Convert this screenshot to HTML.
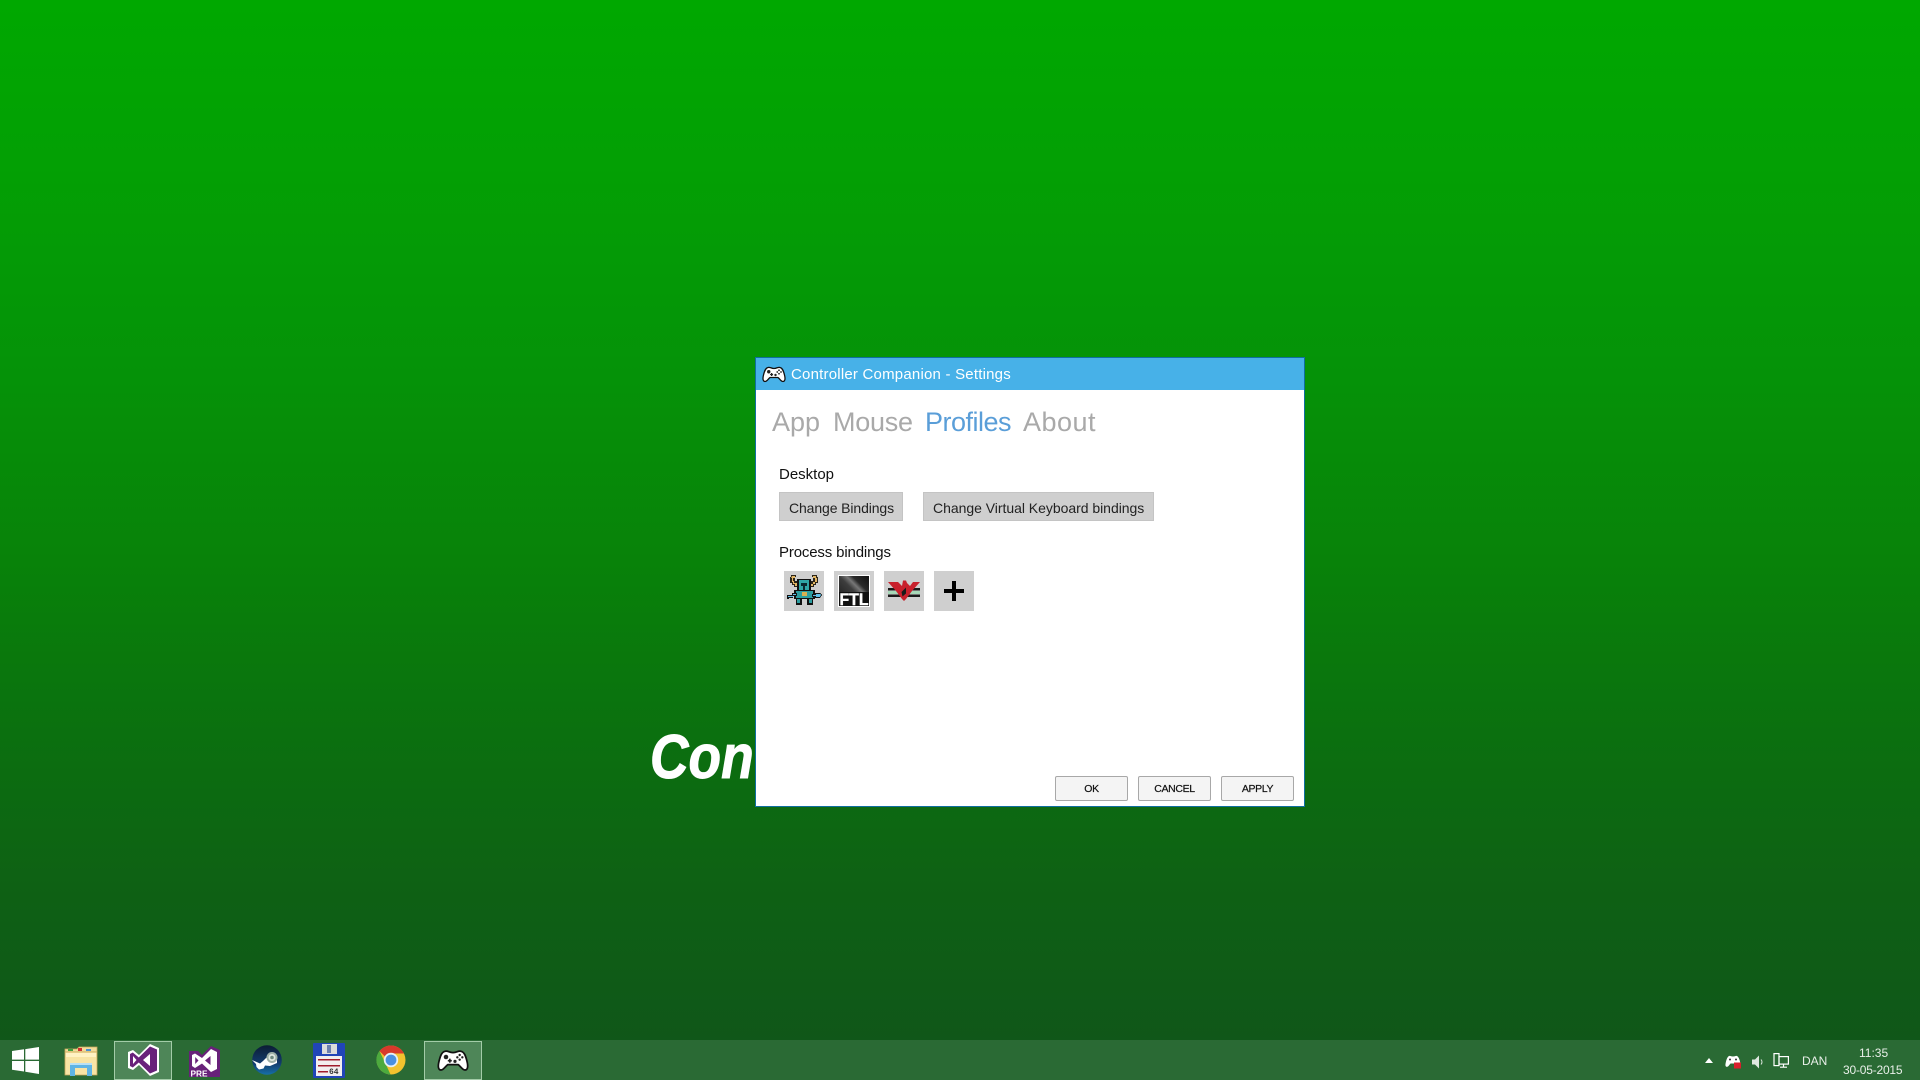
<!DOCTYPE html>
<html lang="en"><head><meta charset="utf-8"><title>Controller Companion - Settings</title>
<style>
html,body{margin:0;padding:0;width:1920px;height:1080px;overflow:hidden}
body{position:relative;font-family:"Liberation Sans",sans-serif;background:linear-gradient(180deg,#00a800 0,#03a004 15%,#059208 35%,#088209 52%,#0b700f 68%,#0e6114 82%,#10541a 100%)}
.a{position:absolute;white-space:nowrap}
svg{position:absolute;overflow:visible}
</style></head><body>
<svg width="0" height="0" style="position:absolute"><defs>
<symbol id="pad" viewBox="0 0 48 32" overflow="visible">
<path d="M12 3C16 1.500 18 5 24 5S32 1.500 36 3C41 4 43 10 45 18C47 26 46 31 42 31C38 31 36 26 32 23H16C12 26 10 31 6 31C2 31 1 26 3 18C5 10 7 4 12 3Z" fill="#fff" stroke="#111" stroke-width="2.600" stroke-linejoin="round"/>
<circle cx="13.500" cy="11.500" r="3.400" fill="#222"/><circle cx="34" cy="8.500" r="1.800" fill="#222"/><circle cx="38" cy="12" r="1.800" fill="#222"/><circle cx="30.500" cy="12" r="1.800" fill="#222"/><circle cx="34" cy="15.500" r="1.800" fill="#222"/><rect x="18" y="14" width="2.500" height="6" fill="#222"/><rect x="16.200" y="15.800" width="6" height="2.500" fill="#222"/><circle cx="27" cy="18" r="2.400" fill="#222"/>
</symbol></defs></svg>

<div class="a" style="left:650px;top:723px;width:102px;height:70px;overflow:hidden"><div style="transform:scaleX(.86);transform-origin:0 0;font:italic bold 62px/70px 'Liberation Sans',sans-serif;color:#fff;-webkit-text-stroke:1px #fff">Controller Companion</div></div>

<!-- dialog -->
<div class="a" style="left:755px;top:357px;width:550px;height:450px;background:#fff;border:1px solid #0f6f9f;box-sizing:border-box">
<div style="position:absolute;left:0;top:0;right:0;height:32px;background:#47b1e8"></div></div>
<svg style="left:762px;top:365px" width="24" height="18"><use href="#pad" width="24" height="18"/></svg>
<div class="a" style="left:791px;top:366px;font-size:15px;line-height:18px;color:#fff;letter-spacing:.21px">Controller Companion - Settings</div>
<div class="a" style="left:772px;top:406px;font-size:27px;line-height:32px;color:#a9a9a9">App</div>
<div class="a" style="left:833px;top:406px;font-size:27px;line-height:32px;color:#a9a9a9;letter-spacing:-.25px">Mouse</div>
<div class="a" style="left:925px;top:406px;font-size:27px;line-height:32px;color:#5a9ed8;letter-spacing:-.5px">Profiles</div>
<div class="a" style="left:1023px;top:406px;font-size:27px;line-height:32px;color:#a9a9a9;letter-spacing:.5px">About</div>
<div class="a" style="left:779px;top:465.500px;font-size:15px;line-height:18px;color:#111">Desktop</div>
<div class="a" style="left:779px;top:492px;width:124px;height:29px;background:#cfcfcf;border:1px solid #c4c4c4;box-sizing:border-box"></div>
<div class="a" style="left:789px;top:499px;font-size:14px;line-height:18px;color:#222;letter-spacing:-.11px">Change Bindings</div>
<div class="a" style="left:923px;top:492px;width:231px;height:29px;background:#cfcfcf;border:1px solid #c4c4c4;box-sizing:border-box"></div>
<div class="a" style="left:933px;top:499px;font-size:14px;line-height:18px;color:#222;letter-spacing:-.03px">Change Virtual Keyboard bindings</div>
<div class="a" style="left:779px;top:543.500px;font-size:15px;line-height:18px;color:#111;letter-spacing:-.15px">Process bindings</div>

<!-- shovel knight -->
<svg style="left:784px;top:571px" width="40" height="40" viewBox="0 0 40 40" shape-rendering="crispEdges">
<rect width="40" height="40" fill="#cfcfcf"/>
<path d="M7 4h5v2H11v4h2v3h2v3H10v-2H8v-2H6V6h1zM28 4h5v2h1v6h-2v2h-2v2H25v-3h2v-3h2V6h-1z" fill="#2a2418"/>
<path d="M8 5h3v2H9v3h1v2h3v3h-2v-2H9v-2H8V7H7zM29 5h3v2h1v4h-2v2h-2v2h-3v-2h3v-2h2V7h-2z" fill="#e2b664"/>
<rect x="13" y="8" width="14" height="13" fill="#111"/><rect x="15" y="9" width="10" height="10" fill="#2fa6a6"/><rect x="17" y="12" width="6" height="3" fill="#0a2a30"/><rect x="19" y="12" width="2" height="7" fill="#0a2a30"/>
<rect x="10" y="19" width="21" height="9" fill="#111"/><rect x="12" y="20" width="17" height="7" fill="#2c9da0"/><rect x="18" y="21" width="5" height="4" fill="#d8b050"/>
<path d="M3 24h5v-2h5v3H9v2H5v1H3zM28 23h3v-1h5l2 2-2 3h-5v-1h-3z" fill="#111"/><path d="M4 25h5v-2h3v1H9v2H4zM29 24h3v-1h4l1 1-1 2h-4v-1h-3z" fill="#5fc0e8"/>
<rect x="12" y="28" width="6" height="6" fill="#111"/><rect x="23" y="28" width="6" height="6" fill="#111"/><rect x="13" y="28" width="3" height="4" fill="#2c9da0"/><rect x="25" y="28" width="3" height="4" fill="#2c9da0"/>
</svg>
<!-- FTL -->
<svg style="left:834px;top:571px" width="40" height="40" viewBox="0 0 40 40">
<defs><linearGradient id="ft" x1="0" y1="1" x2="1" y2="0"><stop offset="0" stop-color="#151515"/><stop offset=".5" stop-color="#3d3d3d"/><stop offset=".62" stop-color="#777"/><stop offset=".72" stop-color="#2a2a2a"/><stop offset="1" stop-color="#111"/></linearGradient></defs>
<rect width="40" height="40" fill="#cfcfcf"/><rect x="4" y="4" width="32" height="32" fill="#fff"/><rect x="5" y="5" width="30" height="30" fill="url(#ft)"/><rect x="5" y="21" width="30" height="14" fill="#111"/>
<text x="20" y="34" text-anchor="middle" font-family="Liberation Sans" font-weight="700" font-size="16.500" fill="#fff" stroke="#fff" stroke-width=".4" textLength="29" lengthAdjust="spacingAndGlyphs">FTL</text>
</svg>
<!-- papers please -->
<svg style="left:884px;top:571px" width="40" height="40" viewBox="0 0 40 40">
<rect width="40" height="40" fill="#cfcfcf"/>
<path d="M4 17h12v2.500H4zM24 17h12v2.500H24zM4 23.500h14v2.500H4zM22 23.500h14v2.500H22z" fill="#1a1a1a"/><path d="M4 20h13v3H4zM23 20h13v3H23z" fill="#a6d8b8"/>
<path d="M4 11H14L18 15 19 9.500H22L23 12 26 15 29 11H36L28 20 25 24 22 28 20 30 18 28 15 24 12 20Z" fill="#c8202c"/>
<path d="M17.500 21L22 16.500V22.500L18.500 25.500Z" fill="#1a1a1a"/>
</svg>
<!-- plus -->
<svg style="left:934px;top:571px" width="40" height="40" viewBox="0 0 40 40"><rect width="40" height="40" fill="#cfcfcf"/><rect x="10" y="18" width="20" height="4" fill="#000"/><rect x="18" y="10" width="4" height="20" fill="#000"/></svg>

<!-- OK/Cancel/Apply -->
<div class="a" style="left:1055px;top:776px;width:73px;height:25px;background:#f4f4f4;border:1px solid #a8a8a8;border-radius:2px;box-sizing:border-box;text-align:center;font-size:10.500px;line-height:25px;color:#111;letter-spacing:-.35px;-webkit-text-stroke:.2px #111">OK</div>
<div class="a" style="left:1138px;top:776px;width:73px;height:25px;background:#f4f4f4;border:1px solid #a8a8a8;border-radius:2px;box-sizing:border-box;text-align:center;font-size:10.500px;line-height:25px;color:#111;letter-spacing:-.35px;-webkit-text-stroke:.2px #111">CANCEL</div>
<div class="a" style="left:1221px;top:776px;width:73px;height:25px;background:#f4f4f4;border:1px solid #a8a8a8;border-radius:2px;box-sizing:border-box;text-align:center;font-size:10.500px;line-height:25px;color:#111;letter-spacing:-.35px;-webkit-text-stroke:.2px #111">APPLY</div>

<!-- taskbar -->
<div class="a" style="left:0;top:1040px;width:1920px;height:40px;background:#2a6a34"></div>
<div class="a" style="left:114px;top:1041px;width:58px;height:39px;background:#4e8658;border:1px solid #a3cca8;box-sizing:border-box"></div>
<div class="a" style="left:424px;top:1041px;width:58px;height:39px;background:#4e8658;border:1px solid #a3cca8;box-sizing:border-box"></div>

<!-- windows -->
<svg style="left:12px;top:1047px" width="27" height="27" viewBox="0 0 27 27"><path d="M0 4L12 2.300V12.600H0zM13.300 2.100L27 0V12.600H13.300zM0 14H12V24.500L0 22.800zM13.300 14H27V27L13.300 24.800z" fill="#fff"/></svg>
<!-- explorer -->
<svg style="left:64px;top:1046px" width="34" height="31" viewBox="0 0 34 31">
<path d="M1 3H13L15 1H33V6H1Z" fill="#f3dc9b" stroke="#c9a85c" stroke-width=".800"/>
<rect x="4" y="3" width="5" height="2" fill="#3fa03f"/><rect x="14" y="2" width="4" height="3" fill="#d03030"/><rect x="22" y="3" width="5" height="2" fill="#4a90d0"/>
<path d="M1 6H33V29H1Z" fill="#f8e4a4" stroke="#c9a85c" stroke-width=".800"/><rect x="2" y="7" width="30" height="4" fill="#fff2c4"/>
<path d="M6 17H28V30H23V22H11V30H6Z" fill="#5fb4e4"/><rect x="6" y="17" width="22" height="2" fill="#b8e0f4"/>
</svg>
<!-- VS -->
<svg style="left:126px;top:1043px" width="34" height="34" viewBox="0 0 34 34">
<path d="M24 1L33 5V29L24 33L13 22L7 27L2 25V9L7 7L13 12Z" fill="#fff"/>
<path d="M24 3.500L31 6.500V27.500L24 30.500L12.800 19.500L6.800 24.500L4 23V11L6.800 9.500L12.800 14.500ZM24 11L17 17L24 23ZM7 13V21L10.500 17Z" fill="#68217a" fill-rule="evenodd"/>
</svg>
<!-- VS PRE -->
<svg style="left:189px;top:1045px" width="32" height="33" viewBox="0 0 32 33">
<path d="M0 6H9L13 10L22 1L31 5V32H0Z" fill="#68217a"/>
<path d="M22 4L28 7V24L22 27L13 18.500L6 23L3 21V10L6 8.500L13 13ZM21.500 11L16 15.500L21.500 20ZM6.200 12V19L9.500 15.500Z" fill="#fff" fill-rule="evenodd"/>
<text x="1.500" y="31.500" font-family="Liberation Sans" font-weight="700" font-size="8.500" fill="#fff" textLength="17" lengthAdjust="spacingAndGlyphs">PRE</text>
</svg>
<!-- steam -->
<svg style="left:252px;top:1045px" width="30" height="30" viewBox="0 0 30 30">
<defs><linearGradient id="st" x1="0" y1="0" x2="0" y2="1"><stop offset="0" stop-color="#0c1c34"/><stop offset=".6" stop-color="#123a6c"/><stop offset="1" stop-color="#1670a8"/></linearGradient></defs>
<circle cx="15" cy="15" r="14.800" fill="url(#st)"/>
<path d="M0 15L8 18.500L11 16L17 10L25 10L25 18L18 21L13 20.500L11.500 23.500L7 24.500L4.500 22L4 19Z" fill="#fff"/>
<circle cx="20" cy="12.500" r="5.500" fill="#9fb0a8"/><circle cx="20" cy="12.500" r="3.500" fill="#dfe8e0"/><circle cx="20" cy="12.500" r="1.800" fill="#6f8a80"/>
</svg>
<!-- floppy -->
<svg style="left:313px;top:1043px" width="32" height="35" viewBox="0 0 32 35">
<rect x="0" y="0" width="32" height="35" rx="1" fill="#2145b8"/><rect x="9" y="1" width="15" height="10" fill="#dcdcdc"/><rect x="14" y="2" width="4" height="8" fill="#6c7fae"/>
<rect x="3" y="13" width="26" height="20" fill="#f2eeee"/><rect x="5" y="16" width="22" height="1.500" fill="#a01c2c"/><rect x="5" y="22" width="22" height="1.500" fill="#a01c2c"/><rect x="5" y="28" width="10" height="1.500" fill="#a01c2c"/>
<text x="16" y="31" font-family="Liberation Mono" font-weight="700" font-size="8" fill="#333">64</text>
</svg>
<!-- chrome -->
<svg style="left:376px;top:1045px" width="30" height="30" viewBox="0 0 30 30">
<circle cx="15" cy="15" r="14.500" fill="#f2c22e"/>
<path d="M15 .500A14.500 14.500 0 0 1 28 8.500L15 8.500A6.500 6.500 0 0 0 9 11.500L3.500 6A14.500 14.500 0 0 1 15 .500Z" fill="#d8392b"/>
<path d="M3.500 6L9.500 18.500L14.500 29.500A14.500 14.500 0 0 1 3.500 6Z" fill="#4daa3e"/>
<circle cx="15" cy="15" r="7.200" fill="#e8f0f4"/><circle cx="15" cy="15" r="5.400" fill="#4a8fe0"/>
</svg>
<svg style="left:437px;top:1048px" width="32" height="24"><use href="#pad" width="32" height="24"/></svg>

<!-- tray -->
<svg style="left:1705px;top:1058px" width="8" height="5" viewBox="0 0 8 5"><path d="M0 5L4 0L8 5Z" fill="#fff"/></svg>
<svg style="left:1725px;top:1055px" width="16" height="13" viewBox="0 0 16 13"><path d="M4 1C5.500 .5 6 1.500 8 1.500S10.500 .5 12 1C14 2 15 6 15.500 9C16 12 14 12.500 12.500 11L10.500 8.500H5.500L3.500 11C2 12.500 0 12 .5 9C1 6 2 2 4 1Z" fill="#fff"/><circle cx="5" cy="4.500" r="1" fill="#333"/><circle cx="11" cy="4.500" r="1" fill="#333"/><rect x="9" y="7.500" width="7" height="6" fill="#d8202c"/></svg>
<svg style="left:1752px;top:1055px" width="12" height="14" viewBox="0 0 12 14"><path d="M0 4.500H3L7 .5V13.500L3 9.500H0Z" fill="#dfe8e0"/><path d="M9 4.500Q11 7 9 9.500" fill="none" stroke="#dfe8e0"/></svg>
<svg style="left:1773px;top:1053px" width="16" height="15" viewBox="0 0 16 15"><g fill="none" stroke="#fff" stroke-width="1.200"><rect x="1" y=".6" width="5" height="12"/><rect x="6" y="3.600" width="9.400" height="7.500"/><path d="M10.500 11V14M7 14.200H14"/></g></svg>
<div class="a" style="left:1802px;top:1053px;font-size:12px;line-height:16px;color:#e8efe8">DAN</div>
<div class="a" style="left:1859px;top:1045px;font-size:12px;line-height:16px;color:#e8efe8">11:35</div>
<div class="a" style="left:1843px;top:1062px;font-size:12px;line-height:16px;color:#e8efe8;letter-spacing:-.2px">30-05-2015</div>
</body></html>
